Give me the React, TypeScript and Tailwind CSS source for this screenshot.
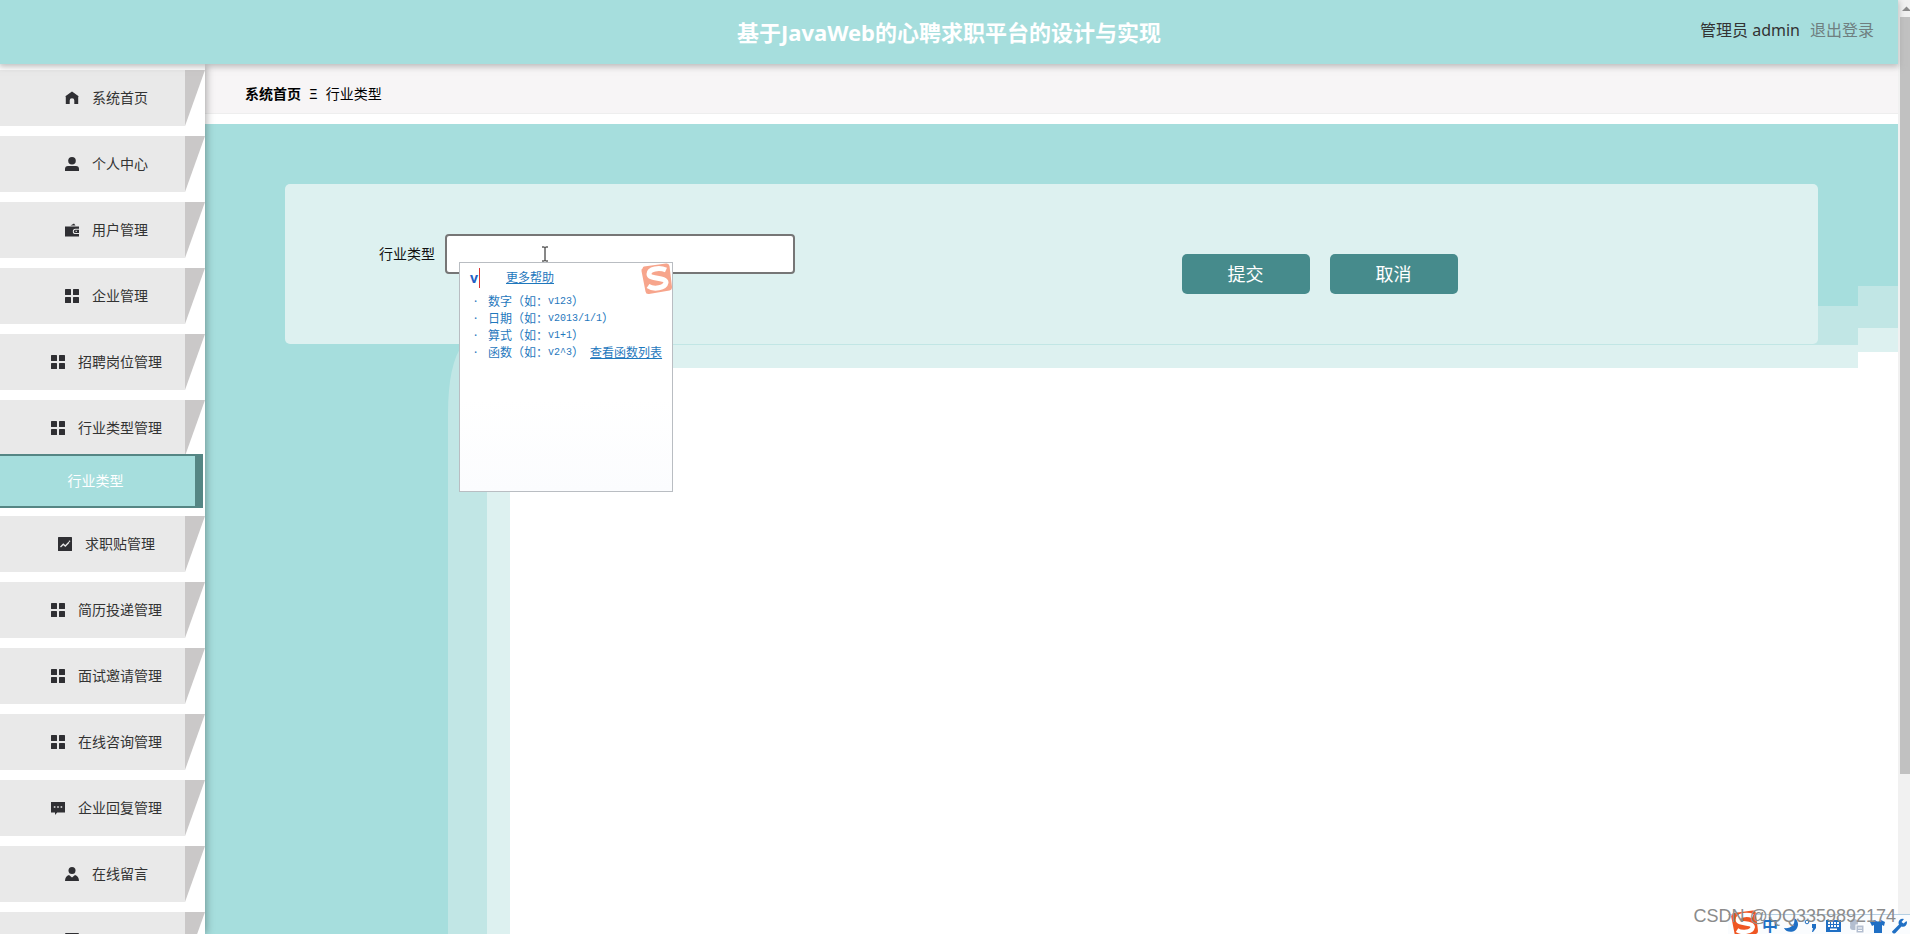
import type { ReactNode } from 'react';

type IconName = 'home' | 'user' | 'wallet' | 'menu' | 'chart' | 'comment' | 'custom' | 'box';

interface MenuItem {
  label: string;
  icon: IconName;
  children?: string[];
}

const menuItems: MenuItem[] = [
  { label: '系统首页', icon: 'home' },
  { label: '个人中心', icon: 'user' },
  { label: '用户管理', icon: 'wallet' },
  { label: '企业管理', icon: 'menu' },
  { label: '招聘岗位管理', icon: 'menu' },
  { label: '行业类型管理', icon: 'menu', children: ['行业类型'] },
  { label: '求职贴管理', icon: 'chart' },
  { label: '简历投递管理', icon: 'menu' },
  { label: '面试邀请管理', icon: 'menu' },
  { label: '在线咨询管理', icon: 'menu' },
  { label: '企业回复管理', icon: 'comment' },
  { label: '在线留言', icon: 'custom' },
  { label: '', icon: 'box' },
];

const iconShapes: Record<IconName, ReactNode> = {
  home: <path d="M7 0.5 14 5.6H13.200V13H9.3V9.6a2.3 2.3 0 0 0-4.6 0V13H0.8V5.6H0Z" />,
  user: (
    <>
      <circle cx="7" cy="3.8" r="3.8" />
      <path d="M0 14v-2a3 3 0 0 1 3-3h8a3 3 0 0 1 3 3v2Z" />
    </>
  ),
  wallet: (
    <path
      fillRule="evenodd"
      d="M5.5 2.6 9 0.6l1.500 2ZM0 3.6h14v2.2h-3.6a2.6 2.6 0 0 0 0 5.2H14v2.6H0ZM10.4 6.8H14v3.2h-3.6a1.6 1.6 0 0 1 0-3.2Zm.2 1v1.2h1.2V7.8Z"
    />
  ),
  menu: (
    <>
      <rect x="0" y="0" width="6" height="6" rx="0.5" />
      <rect x="8" y="0" width="6" height="6" rx="0.5" />
      <rect x="0" y="8" width="6" height="6" rx="0.5" />
      <rect x="8" y="8" width="6" height="6" rx="0.5" />
    </>
  ),
  chart: (
    <>
      <rect width="14" height="14" rx="0.5" />
      <path d="M2.5 10 5.3 7.2 7.3 9 11 5.2" fill="none" stroke="#e9e9e9" strokeWidth="1.3" />
      <circle cx="11.5" cy="4.2" r="0.8" fill="#e9e9e9" />
    </>
  ),
  comment: (
    <>
      <path d="M0 1h14v10.5H6.2L4 14v-2.5H0Z" />
      <path d="M2.8 5.2h1.6v1.6H2.8ZM6.2 5.2h1.6v1.6H6.2ZM9.6 5.2h1.6v1.6H9.6Z" fill="#e9e9e9" />
    </>
  ),
  custom: (
    <>
      <circle cx="7" cy="3.6" r="3.5" />
      <path d="M0 14c0-3.200 1.600-5.400 4-6l3 2.600L10 8c2.400.6 4 2.800 4 6Z" />
    </>
  ),
  box: <rect width="14" height="14" rx="1" />,
};

function MenuIcon({ name }: { name: IconName }) {
  return (
    <svg className="size-3.5 shrink-0 fill-[#2f2f33]" viewBox="0 0 14 14" aria-hidden="true">
      {iconShapes[name]}
    </svg>
  );
}

function SogouLogo({ className }: { className: string }) {
  return (
    <svg className={className} viewBox="0 0 32 32" aria-hidden="true">
      <path d="M3 5Q2 4 4 3.500L26 0.500Q29 0 29.500 3L32 24Q32 27 29.500 27.500L9 31Q6 31.500 5.500 28.500L1.500 8Q1 6 3 5Z" fill="currentColor" />
      <path
        d="M26 7C19 4 9 6 9 11C9 17 26 13.500 26 19.500C25 25 14 27 8 23"
        fill="none"
        stroke="#fff"
        strokeWidth="5"
      />
    </svg>
  );
}

function Header() {
  return (
    <header className="relative z-20 grid h-16 shrink-0 grid-cols-[1fr_auto_1fr] items-center bg-[#a6dedd] px-6 shadow-[0_2px_6px_1px_#99999999]">
      <h1 className="col-start-2 text-[22px] font-bold text-white">
        基于JavaWeb的心聘求职平台的设计与实现
      </h1>
      <div className="flex justify-end gap-2.5 pb-1 text-base text-[#333]">
        <span>管理员 admin</span>
        <a href="#logout" className="text-[#6f7f80]">
          退出登录
        </a>
      </div>
    </header>
  );
}

function Sidebar() {
  return (
    <nav className="relative z-10 w-[205px] shrink-0 bg-white pt-1.5 shadow-[1px_0_8px_rgba(0,0,0,0.35)]">
      <ul className="flex flex-col gap-2.5">
        {menuItems.map((item, index) => (
          <li key={index} className={item.children ? '-mb-0.5' : undefined}>
            <a href={`#menu-${index}`} className="flex h-14 bg-[#e9e9e9] text-sm text-[#333]">
              <span className="flex flex-1 items-center justify-center gap-[13px] pl-7">
                <MenuIcon name={item.icon} />
                <span className="min-w-14">{item.label}</span>
              </span>
              <svg className="h-14 w-5 bg-white" viewBox="0 0 20 56" aria-hidden="true">
                <path d="M0 0H20L0 56Z" fill="#cac8c8" />
              </svg>
            </a>
            {item.children?.map((child) => (
              <a
                key={child}
                href={`#${child}`}
                className="relative -mt-0.5 mr-0.5 flex h-[54px] items-center justify-center border-y-2 border-r-8 border-[#558684] bg-[#a6dedd] pr-1 text-sm text-white"
              >
                {child}
              </a>
            ))}
          </li>
        ))}
      </ul>
    </nav>
  );
}

// Layered frame artwork behind the form
function Backdrop() {
  return (
    <svg
      className="absolute inset-0 size-full"
      viewBox="0 0 1693 810"
      preserveAspectRatio="none"
      aria-hidden="true"
    >
      <rect width="1693" height="810" fill="#a6dedd" />
      <path d="M243 810V290Q243 240 258 220V182H1653V162H1693V810Z" fill="#c1e6e5" />
      <path d="M282 810V262Q282 232 310 221H1653V204H1693V810Z" fill="#ddf1f0" />
      <path d="M305 810V275Q305 250 330 244H1653V228H1693V810Z" fill="#fff" />
    </svg>
  );
}

function ImePopup() {
  const rows = [
    { name: '数字', sample: 'v123' },
    { name: '日期', sample: 'v2013/1/1' },
    { name: '算式', sample: 'v1+1' },
    { name: '函数', sample: 'v2^3', link: '查看函数列表' },
  ];

  return (
    <div className="absolute top-7 left-3.5 z-10 h-[230px] w-[214px] border border-[#b9bdc2] bg-linear-to-b from-white from-60% to-[#fbfcfe] text-xs text-[#1f78bd]">
      <div className="flex h-[30px] items-center pl-2.5">
        <span className="border-r border-[#d33] pr-px text-sm leading-5 font-bold text-[#1f62c5]">v</span>
        <a href="#help" className="ml-6.5 underline">
          更多帮助
        </a>
      </div>
      <SogouLogo className="absolute top-0 right-0 size-8 text-[#f7a58c]" />
      <ul>
        {rows.map((row) => (
          <li key={row.name} className="flex h-[17px] items-center pl-3.5 whitespace-nowrap">
            <span className="w-3.5">·</span>
            {row.name}（如：
            <span className="font-['Liberation_Mono',monospace] text-[10px]">{row.sample}</span>）
            {row.link && (
              <a href="#functions" className="ml-1.5 underline">
                {row.link}
              </a>
            )}
          </li>
        ))}
      </ul>
    </div>
  );
}

function TypeForm() {
  return (
    <form
      className="relative mx-20 mt-15 flex h-40 items-start rounded-[5px] bg-[#ddf1f0] pt-[50px] pl-[94px]"
      onSubmit={(e) => e.preventDefault()}
    >
      <label htmlFor="industry" className="pr-2.5 text-sm leading-10 text-[#111]">
        行业类型
      </label>
      <div className="relative">
        <input
          id="industry"
          type="text"
          className="block h-10 w-[350px] rounded border-2 border-[#767676] bg-white px-3 text-sm outline-none"
        />
        <svg className="absolute top-3 left-24 h-4 w-2" viewBox="0 0 8 16" aria-hidden="true">
          <path d="M1 1h2.500L4 1.500 4.500 1H7M4 1.500v13M1 15h2.500L4 14.500 4.500 15H7" fill="none" stroke="#111" />
        </svg>
        <ImePopup />
      </div>
      <div className="mt-5 ml-6.5 flex flex-1 justify-center gap-5">
        <button type="submit" className="h-10 w-32 rounded-[5px] bg-[#468b8c] text-lg text-white">
          提交
        </button>
        <button type="button" className="h-10 w-32 rounded-[5px] bg-[#468b8c] text-lg text-white">
          取消
        </button>
      </div>
    </form>
  );
}

function ImeBar() {
  return (
    <div className="absolute right-0 bottom-0 z-30 flex h-5 w-[182px] items-center gap-1 overflow-hidden border-t border-[#b5cfe3] bg-[#fafcfe] text-[#1f6fc4]">
      <span className="w-8" />
      <span className="w-4 text-base leading-4 font-bold">中</span>
      <svg className="h-[18px] w-32 shrink-0" viewBox="0 0 128 18" fill="currentColor" aria-hidden="true">
        <path d="M12 2c2 7-4 11-10 10c3 6 13 5 14-3c.300-3-1.500-6-4-7Z" />
        <circle cx="25" cy="6" r="1.800" fill="none" stroke="currentColor" />
        <path d="M30 8h4v4l-3 4h-1l1-4h-1Z" />
        <path
          fillRule="evenodd"
          d="M44 4h15v12H44ZM46 6v2h2V6Zm3 0v2h2V6Zm3 0v2h2V6Zm3 0v2h2V6ZM46 9v2h2V9Zm3 0v2h2V9Zm3 0v2h2V9Zm3 0v2h2V9ZM48 12.500v1.500h7v-1.500Z"
        />
        <g fill="#b3bed0">
          <circle cx="72" cy="7" r="4" />
          <rect x="68" y="8" width="8" height="6" rx="3" />
          <rect x="74" y="9" width="8" height="8" stroke="#fff" />
          <path d="M76 12h4M76 14.500h4" stroke="#fff" />
        </g>
        <path d="M93 4l-5 2 2 4 2-1v8h8V9l2 1 1-4-4-2q-3 3-6 0Z" />
        <path d="M110 15.500l7-7a4 4 0 0 1 5-5.500l-2.500 3 2 1.500L124.500 5a4 4 0 0 1-5 5.500l-6 6.500q-3 1.500-3.500-1.500Z" />
      </svg>
    </div>
  );
}

function Scrollbar() {
  return (
    <div className="flex w-3 shrink-0 flex-col bg-[#f1f1f1] pl-0.5" aria-hidden="true">
      <svg className="h-[17px] w-2.5" viewBox="0 0 10 17">
        <path d="M2 11 6.500 6.500 10 10V11Z" fill="#8b8b8b" />
      </svg>
      <div className="h-[81%] bg-[#c1c1c1]" />
    </div>
  );
}

export default function App() {
  return (
    <div className="relative flex h-screen overflow-hidden bg-white font-['Noto_Sans','Noto_Sans_CJK_SC',sans-serif]">
      <div className="flex min-w-0 flex-1 flex-col">
        <Header />
        <div className="flex min-h-0 flex-1">
          <Sidebar />
          <main className="flex min-w-0 flex-1 flex-col">
            <div className="mb-2.5 flex h-[50px] items-center gap-2 border-b border-[#eee] bg-[#f7f5f6] pt-2.5 pl-10 text-sm text-black">
              <a href="#home" className="font-bold">
                系统首页
              </a>
              <span>Ξ</span>
              <span>行业类型</span>
            </div>
            <section className="relative flex-1">
              <Backdrop />
              <div className="flow-root">
                <TypeForm />
              </div>
            </section>
          </main>
        </div>
      </div>
      <Scrollbar />
      <ImeBar />
      <SogouLogo className="absolute right-[152px] -bottom-1 z-30 size-7 text-[#ef5623]" />
      <p className="absolute right-3.5 bottom-1.5 z-40 font-['Liberation_Sans',sans-serif] text-lg leading-6 text-[#8b8b8b]">
        CSDN @QQ3359892174
      </p>
    </div>
  );
}
